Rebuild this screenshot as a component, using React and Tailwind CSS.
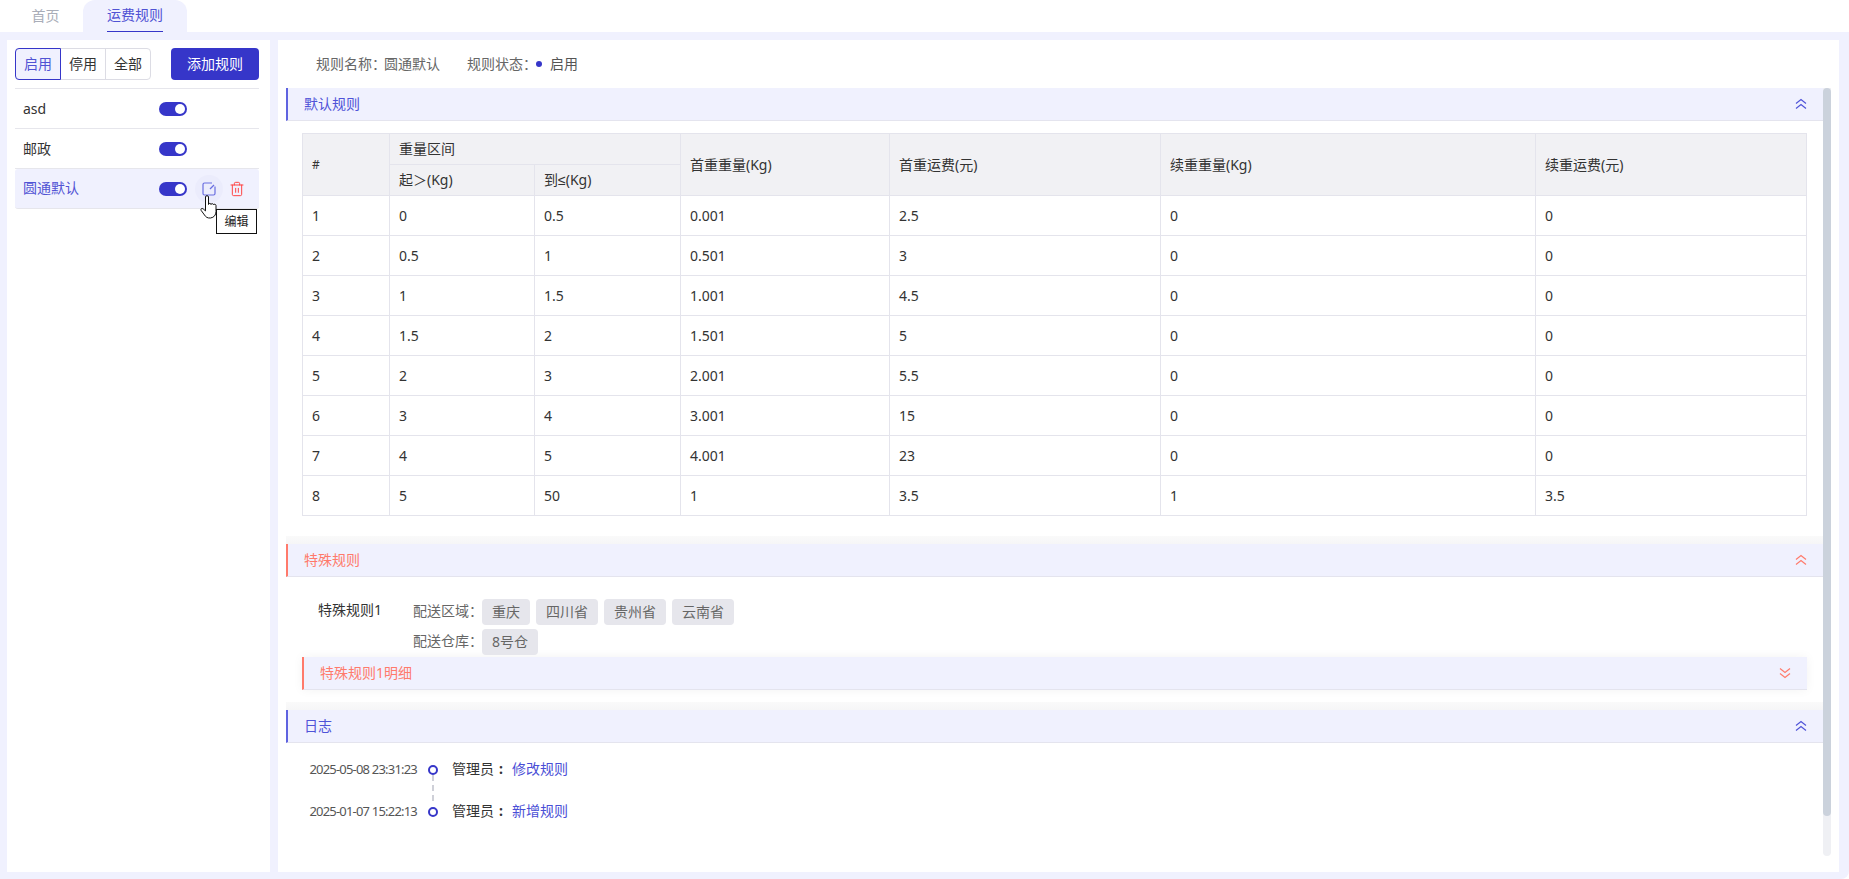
import { Trash2 } from "lucide-react";

const rows = [
    ["1", "0", "0.5", "0.001", "2.5", "0", "0"],
    ["2", "0.5", "1", "0.501", "3", "0", "0"],
    ["3", "1", "1.5", "1.001", "4.5", "0", "0"],
    ["4", "1.5", "2", "1.501", "5", "0", "0"],
    ["5", "2", "3", "2.001", "5.5", "0", "0"],
    ["6", "3", "4", "3.001", "15", "0", "0"],
    ["7", "4", "5", "4.001", "23", "0", "0"],
    ["8", "5", "50", "1", "3.5", "1", "3.5"],
];

const Chevrons = ({ down, className }) => (
    <svg width="12" height="12" viewBox="0 0 12 12" fill="none" stroke="currentColor" strokeWidth="1.2" className={className}>
        {down ? (
            <path d="M1 1.5 6 5.5 11 1.5M1 6.5 6 10.5 11 6.5" />
        ) : (
            <path d="M1 5.5 6 1.5 11 5.5M1 10.5 6 6.5 11 10.5" />
        )}
    </svg>
);

const SectionHeader = ({ title, red, down, inset }) => (
    <div
        className={`flex h-[33px] items-center justify-between border-b border-[#e4e4ee] border-l-2 bg-[#f0f1fe] pl-[16px] pr-[16px] ${
            red ? "border-l-[#ff7a6b] text-[#ff7a6b]" : "border-l-[#5f63e0] text-[#4f53d8]"
        } ${inset ? "shadow-[0_0_10px_rgba(0,0,0,0.05)]" : ""}`}
    >
        <span className="text-sm">{title}</span>
        <Chevrons down={down} />
    </div>
);

const Band = () => <div className="h-2 bg-gradient-to-b from-[#fafafa] to-[#f6f6f7]" />;

const Switch = () => (
    <div className="flex h-[14px] w-[28px] items-center justify-end rounded-full bg-[#3636c9] pr-[2px]">
        <div className="h-[10px] w-[10px] rounded-full bg-white" />
    </div>
);

const RuleItem = ({ name, active }) => (
    <div
        className={`relative flex h-[40px] items-center border-b border-[#e6e6ec] pl-2 text-sm ${
            active ? "rounded-[3px] bg-[#f0f1fe] text-[#5053d4]" : "text-[#333]"
        }`}
    >
        <span className={`w-[136px] ${active ? "pb-[2px]" : ""}`}>{name}</span>
        <Switch />
        {active && (
            <>
                <div className="ml-2 flex h-7 w-7 items-center justify-center rounded-full bg-[#ebecfc]">
                    <svg width="14" height="14" viewBox="0 0 14 14" fill="none" stroke="#6a6ee0" strokeWidth="1.2">
                        <path d="M10 1H2.5A1.5 1.5 0 0 0 1 2.5v9A1.5 1.5 0 0 0 2.5 13h9a1.5 1.5 0 0 0 1.5-1.5V4.5" />
                        <path d="M12 3 8 7" />
                    </svg>
                </div>
                <Trash2 size={16} strokeWidth={1.5} className="ml-[6px] text-[#f44]" />
                <svg width="19" height="24" viewBox="0 0 19 24" className="absolute left-[185px] top-[26px]" fill="#fff" stroke="#111" strokeWidth="1">
                    <path d="M5.5 2c0-1.8 3-1.8 3 0v7.5c0-1.5 2.5-1.5 2.5 0 0-1.2 2.5-1.2 2.5.3 .3-1 2.5-.7 2.5.7v6c0 3.5-2 6-5.5 6.5-3 .3-4.8-1-6-3L1.2 15.5c-1-1.3.6-2.8 2-1.6l2.3 2Z" />
                </svg>
                <div className="absolute left-[201px] top-[40px] z-10 flex h-[25px] w-[41px] items-center justify-center border border-[#111] bg-white text-xs text-[#222]">
                    编辑
                </div>
            </>
        )}
    </div>
);

const Tag = ({ children }) => (
    <span className="flex h-[26px] items-center rounded-[4px] bg-[#e6e6ec] px-[10px] text-sm text-[#666]">{children}</span>
);

const TagRow = ({ label, tags }) => (
    <div className="flex">
        <span className="w-[69px] whitespace-nowrap text-sm leading-[24px] text-[#666]">{label}</span>
        <div className="flex gap-[6px]">
            {tags.map((tag) => (
                <Tag key={tag}>{tag}</Tag>
            ))}
        </div>
    </div>
);

const LogItem = ({ time, action, last }) => (
    <div className="flex h-[42px]">
        <span className="w-[115px] whitespace-nowrap text-right text-[13px] leading-[20px] tracking-[-0.8px] text-[#555]">{time}</span>
        <div className="ml-[11px] flex w-[10px] flex-col items-center pt-[6px]">
            <div className="h-[10px] w-[10px] rounded-full border-2 border-[#3636c9] bg-white" />
            {!last && <div className="h-[26px] border-l-2 border-dashed border-[#cfd0d8]" />}
        </div>
        <span className="ml-[14px] text-sm leading-[20px] text-[#333]">管理员</span>
        <span className="w-[14px] text-center text-sm font-bold leading-[20px] text-[#333]">:</span>
        <span className="ml-[4px] text-sm leading-[20px] text-[#4a4fd6]">{action}</span>
    </div>
);

const th = "border border-[#e4e4ec] bg-[#f1f1f4] px-[9px] text-left text-sm font-normal text-[#333]";
const td = "border border-[#e4e4ec] px-[9px] text-sm text-[#333]";

export default function App() {
    return (
        <div className="flex h-screen flex-col overflow-hidden bg-white font-['Noto_Sans','Noto_Sans_CJK_SC',sans-serif]">
            <div className="flex h-8 shrink-0 pl-[13px] text-sm">
                <div className="flex w-[70px] items-center justify-center pb-[1px] pr-[5px] text-[#a9adb8]">首页</div>
                <div className="flex w-[104px] justify-center rounded-t-xl bg-[#f0f1fe]">
                    <span className="h-8 w-[56px] border-b border-[#3636c9] pt-[5px] text-[#5053d4]">运费规则</span>
                </div>
            </div>

            <div className="flex flex-1 gap-2 rounded-br-lg bg-[#f0f1fe] pb-[7px] pl-[7px] pr-[10px] pt-2">
                <div className="w-[263px] shrink-0 bg-white pl-2 pr-[11px] pt-2">
                    <div className="flex justify-between">
                        <div className="flex h-8 w-[136px] rounded-[4px] border border-[#dcdce4] text-sm text-[#333]">
                            <span className="-my-px -ml-px flex w-[46px] items-center justify-center rounded-l-[4px] border border-[#3636c9] bg-[#f0f1fe] text-[#5053d4]">启用</span>
                            <span className="flex w-[45px] items-center justify-center border-r border-[#dcdce4]">停用</span>
                            <span className="flex flex-1 items-center justify-center">全部</span>
                        </div>
                        <button className="h-8 w-[88px] rounded-[4px] bg-[#3636c9] text-sm text-white">添加规则</button>
                    </div>
                    <div className="mt-2 border-t border-[#e6e6ec]">
                        <RuleItem name="asd" />
                        <RuleItem name="邮政" />
                        <RuleItem name="圆通默认" active />
                    </div>
                </div>

                <div className="flex min-w-0 flex-1 flex-col bg-white pb-4 pl-2 pr-2">
                    <div className="flex h-[48px] shrink-0 items-center pl-[30px] text-sm text-[#666]">
                        <span>规则名称：</span>
                        <span className="ml-[-2px]">圆通默认</span>
                        <span className="ml-[27px]">规则状态：</span>
                        <span className="ml-[-1px] h-[6px] w-[6px] rounded-full bg-[#3636c9]" />
                        <span className="ml-[8px] text-[#555]">启用</span>
                    </div>

                    <div className="flex min-h-0 flex-1">
                        <div className="min-w-0 flex-1 overflow-hidden">
                            <SectionHeader title="默认规则" />
                            <div className="px-[16px] pt-3 pb-[20px]">
                                <table className="w-[1504px] table-fixed border-collapse">
                                    <colgroup>
                                        <col className="w-[87px]" />
                                        <col className="w-[145px]" />
                                        <col className="w-[146px]" />
                                        <col className="w-[209px]" />
                                        <col className="w-[271px]" />
                                        <col className="w-[375px]" />
                                        <col className="w-[271px]" />
                                    </colgroup>
                                    <thead>
                                        <tr className="h-[31px]">
                                            <th rowSpan={2} className={`${th} text-xs`}>#</th>
                                            <th colSpan={2} className={th}>重量区间</th>
                                            <th rowSpan={2} className={th}>首重重量(Kg)</th>
                                            <th rowSpan={2} className={th}>首重运费(元)</th>
                                            <th rowSpan={2} className={th}>续重重量(Kg)</th>
                                            <th rowSpan={2} className={th}>续重运费(元)</th>
                                        </tr>
                                        <tr className="h-[31px]">
                                            <th className={th}>起＞(Kg)</th>
                                            <th className={th}>到<span className="font-['Liberation_Sans',sans-serif]">≤</span>(Kg)</th>
                                        </tr>
                                    </thead>
                                    <tbody>
                                        {rows.map((row) => (
                                            <tr key={row[0]} className="h-[40px]">
                                                {row.map((cell, i) => (
                                                    <td key={i} className={td}>{cell}</td>
                                                ))}
                                            </tr>
                                        ))}
                                    </tbody>
                                </table>
                            </div>

                            <Band />
                            <SectionHeader title="特殊规则" red />
                            <div className="px-[16px] pt-[22px]">
                                <div className="flex">
                                    <span className="w-[111px] pl-[16px] text-sm leading-[22px] text-[#333]">特殊规则1</span>
                                    <div className="flex flex-col gap-1">
                                        <TagRow label="配送区域：" tags={["重庆", "四川省", "贵州省", "云南省"]} />
                                        <TagRow label="配送仓库：" tags={["8号仓"]} />
                                    </div>
                                </div>
                                <div className="mt-[2px]">
                                    <SectionHeader title="特殊规则1明细" red down inset />
                                </div>
                            </div>

                            <div className="mt-3">
                                <Band />
                            </div>
                            <SectionHeader title="日志" />
                            <div className="pl-[16px] pt-4">
                                <LogItem time="2025-05-08 23:31:23" action="修改规则" />
                                <LogItem time="2025-01-07 15:22:13" action="新增规则" last />
                            </div>
                        </div>

                        <div className="h-[768px] w-2 shrink-0 rounded-b-full bg-[#eff0f4]">
                            <div className="h-[728px] rounded-full bg-[#cbd2dc]" />
                        </div>
                    </div>
                </div>
            </div>
        </div>
    );
}
